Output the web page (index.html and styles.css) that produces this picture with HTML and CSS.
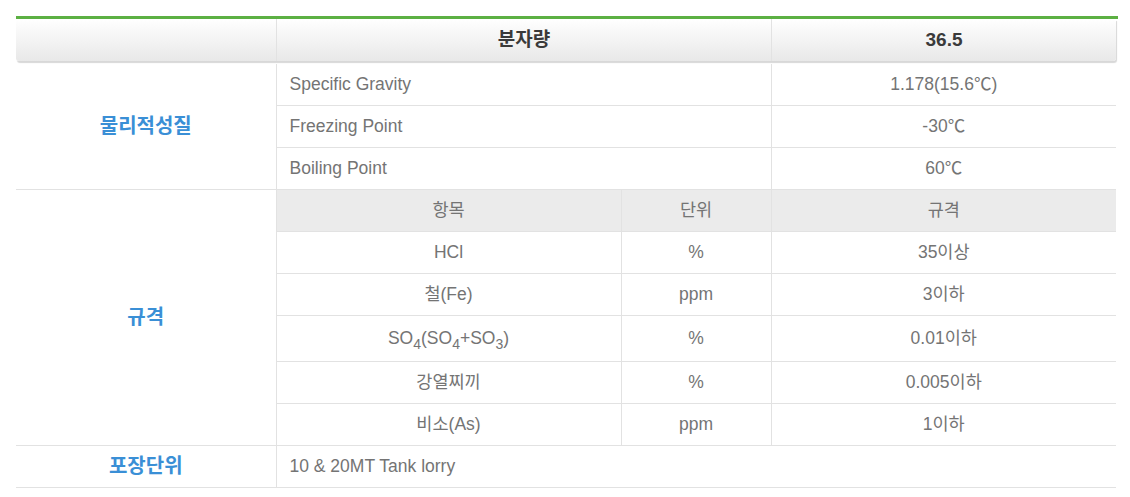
FILE: index.html
```html
<!DOCTYPE html>
<html lang="ko">
<head>
<meta charset="utf-8">
<title>HCl 사양</title>
<link rel="stylesheet" href="styles.css">
</head>
<body>
<div class="spec">
  <div class="topline"></div>
  <div class="head">
    <div class="hcell c1"></div>
    <div class="hcell c2">분자량</div>
    <div class="hcell c3">36.5</div>
  </div>
  <table class="grid">
    <colgroup>
      <col class="w1"><col class="w2"><col class="w3"><col class="w4">
    </colgroup>
    <tbody>
      <tr>
        <td class="label" rowspan="3">물리적성질</td>
        <td class="left" colspan="2">Specific Gravity</td>
        <td>1.178(15.6℃)</td>
      </tr>
      <tr>
        <td class="left" colspan="2">Freezing Point</td>
        <td>-30℃</td>
      </tr>
      <tr>
        <td class="left" colspan="2">Boiling Point</td>
        <td>60℃</td>
      </tr>
      <tr class="sub">
        <td class="label" rowspan="6">규격</td>
        <th>항목</th>
        <th>단위</th>
        <th>규격</th>
      </tr>
      <tr>
        <td>HCl</td>
        <td>%</td>
        <td>35이상</td>
      </tr>
      <tr>
        <td>철(Fe)</td>
        <td>ppm</td>
        <td>3이하</td>
      </tr>
      <tr class="tall">
        <td>SO<sub>4</sub>(SO<sub>4</sub>+SO<sub>3</sub>)</td>
        <td>%</td>
        <td>0.01이하</td>
      </tr>
      <tr>
        <td>강열찌끼</td>
        <td>%</td>
        <td>0.005이하</td>
      </tr>
      <tr>
        <td>비소(As)</td>
        <td>ppm</td>
        <td>1이하</td>
      </tr>
      <tr>
        <td class="label">포장단위</td>
        <td class="left" colspan="3">10 &amp; 20MT Tank lorry</td>
      </tr>
    </tbody>
  </table>
</div>
</body>
</html>
```

FILE: styles.css
```css
html, body {
  margin: 0;
  padding: 0;
  background: #fff;
}
body {
  font-family: "Liberation Sans", "Noto Sans CJK KR", sans-serif;
  font-size: 17.5px;
  color: #747474;
}
.spec {
  width: 1102px;
  padding: 16px 0 0 16px;
}
.topline {
  height: 3px;
  background: #5cb043;
}
.head {
  display: flex;
  width: 1100px;
  height: 42px;
  background: linear-gradient(#ffffff, #e8e8e8);
  border-radius: 0 0 3px 3px;
  box-shadow: 1px 2px 1px #d8d8d8;
  margin-bottom: 3px;
}
.hcell {
  display: flex;
  align-items: center;
  justify-content: center;
  font-weight: bold;
  color: #3a3a3a;
  font-size: 19px;
  line-height: 20px;
}
.hcell.c1 { width: 260px; }
.hcell.c2 { width: 494px; border-left: 1px solid #e2e2e2; }
.hcell.c3 { width: 344px; border-left: 1px solid #e2e2e2; }

.grid {
  width: 1100px;
  border-collapse: collapse;
  table-layout: fixed;
}
.w1 { width: 260px; }
.w2 { width: 345px; }
.w3 { width: 150px; }
.w4 { width: 345px; }

.grid td, .grid th {
  height: 39px;
  padding: 0 0 2px;
  line-height: 18px;
  text-align: center;
  vertical-align: middle;
  border-bottom: 1px solid #e2e2e2;
  border-left: 1px solid #e2e2e2;
  font-weight: normal;
  color: #747474;
}
.grid td.label {
  border-left: 0;
  color: #3a8fd6;
  font-weight: bold;
  font-size: 20px;
}
.grid td.left {
  text-align: left;
  padding-left: 13px;
}
.grid tr.sub th {
  background: #ebebeb;
}
.grid tr.tall td {
  height: 43px;
}
.grid sub {
  font-size: 14px;
  vertical-align: -5px;
  line-height: 0;
}
```
